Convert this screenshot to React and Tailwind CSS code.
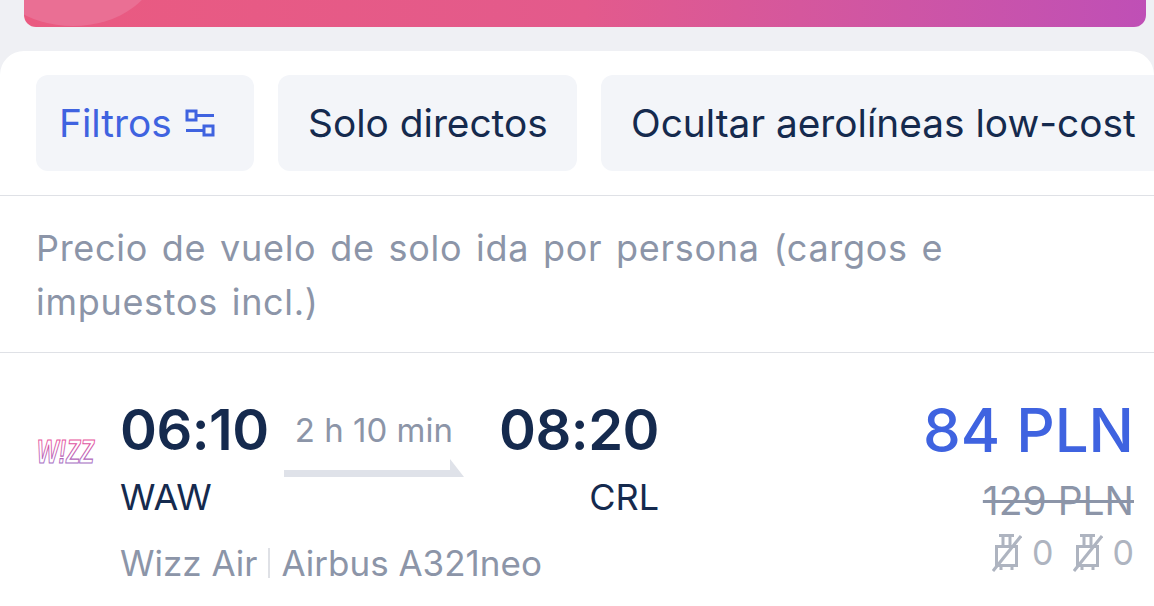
const font = { fontFamily: "Inter, 'Noto Sans', sans-serif" };

function Bag() {
  return (
    <svg width="30" height="40" viewBox="0 0 30 40" fill="none" stroke="#aeb4c0" strokeWidth="3">
      <path d="M7 2.500h15" />
      <path d="M11 3v9M18 3v9" />
      <rect x="4.500" y="13.500" width="20" height="19" />
      <path d="M9 33v4M20 33v4" />
      <path d="M29 3 1 38" />
    </svg>
  );
}

function App() {
  return (
    <div style={font} className="w-[1154px] h-[606px] overflow-hidden bg-[#eff0f4] flex flex-col">
      <div className="relative ml-6 mr-2 h-[27px] shrink-0 overflow-hidden rounded-b-[12px] bg-gradient-to-r from-[#ea5a80] via-[#e35a8c] to-[#bf4fb6]">
        <div className="absolute left-[-36px] top-[-100px] w-[170px] h-[126px] rounded-[50%] bg-[#ea6f94]" />
      </div>
      <div className="mt-6 flex-1 rounded-t-[24px] bg-white overflow-hidden">
        <div className="flex gap-6 pl-9 pt-6 pb-6 border-b border-[#dfe1e6]">
          <div className="h-24 w-[218px] shrink-0 rounded-[12px] bg-[#f3f5f9] pl-[23px] flex items-center gap-[13px] text-[38.800px] text-[#3f63e0]">
            <span>Filtros</span>
            <svg width="30" height="28" viewBox="0 0 30 28" fill="none" stroke="#3f63e0" strokeWidth="3">
              <rect x="2" y="2" width="9" height="9" />
              <path d="M11 6.500h18M1 21.500h18" />
              <rect x="19" y="17" width="9" height="9" />
            </svg>
          </div>
          <div className="h-24 w-[299px] shrink-0 rounded-[12px] bg-[#f3f5f9] pl-[30px] flex items-center text-[38.800px] text-[#152a4e]">Solo directos</div>
          <div className="h-24 shrink-0 rounded-[12px] bg-[#f3f5f9] px-[30px] flex items-center text-[38.800px] text-[#152a4e] whitespace-nowrap">Ocultar aerolíneas low-cost</div>
        </div>
        <div className="px-9 pt-[25px] pb-[23px] border-b border-[#dfe1e6] text-[36px] leading-[54px] tracking-[0.7px] [word-spacing:3px] text-[#8c95a8] w-full">
          <div className="w-[960px]">Precio de vuelo de solo ida por persona (cargos e impuestos incl.)</div>
        </div>
        <div className="flex pl-9 pr-5 pt-[40px]">
          <div className="w-[84px] shrink-0 pt-[44px]">
            <svg width="62" height="40" viewBox="0 0 62 40" className="overflow-visible">
              <defs>
                <linearGradient id="wz" gradientUnits="userSpaceOnUse" x1="0" y1="4" x2="0" y2="30">
                  <stop offset="0" stopColor="#e64f9c" />
                  <stop offset="1" stopColor="#9a6cc8" />
                </linearGradient>
              </defs>
              <text x="1" y="26" fontFamily="'Liberation Sans', sans-serif" fontStyle="italic" fontWeight="700" fontSize="33" textLength="57" lengthAdjust="spacingAndGlyphs" fill="#fff" stroke="url(#wz)" strokeWidth="1.200">W!ZZ</text>
            </svg>
          </div>
          <div className="w-[539px] shrink-0 flex flex-col">
            <div className="flex items-start justify-between">
              <div className="text-[56px] leading-[74px] font-semibold tracking-[-0.5px] text-[#152a4e]">06:10</div>
              <div className="flex flex-col items-center w-[180px] mr-[20px]">
                <div className="text-[33px] leading-[46px] mt-[14px] text-[#8c95a8] whitespace-nowrap">2 h 10 min</div>
                <svg width="180" height="18" viewBox="0 0 180 18" className="mt-[6px]">
                  <path d="M0 18V11h166V0l14 18z" fill="#dfe2e9" />
                </svg>
              </div>
              <div className="text-[56px] leading-[74px] font-semibold tracking-[-0.5px] text-[#152a4e]">08:20</div>
            </div>
            <div className="flex justify-between text-[36px] leading-[44px] mt-[-2px] text-[#152a4e]">
              <span>WAW</span>
              <span>CRL</span>
            </div>
            <div className="flex items-center text-[35px] leading-[44px] mt-[22px] text-[#8c95a8] whitespace-nowrap">
              <span>Wizz Air</span>
              <span className="w-[2px] h-[30px] mx-[11px] bg-[#dfe1e6]" />
              <span>Airbus A321neo</span>
            </div>
          </div>
          <div className="flex-1 flex flex-col items-end">
            <div className="text-[60px] leading-[74px] font-medium text-[#3f63e0]">84 PLN</div>
            <div className="text-[39px] leading-[44px] mt-[12px] text-[#8c95a8] line-through">129 PLN</div>
            <div className="flex items-center mt-[10px] text-[34px] leading-[40px] text-[#aeb4c0]">
              <Bag />
              <span className="ml-[10px] mr-[19px]">0</span>
              <Bag />
              <span className="ml-[10px]">0</span>
            </div>
          </div>
        </div>
      </div>
    </div>
  );
}

export default App;
